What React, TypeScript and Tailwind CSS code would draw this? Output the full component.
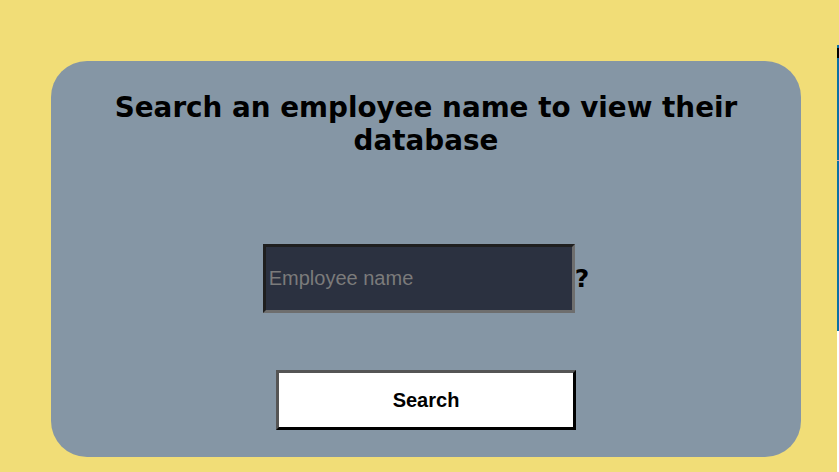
export default function App() {
  return (
    <div className="relative min-h-[472px] w-full overflow-hidden bg-[#f1dd77] pt-[61px] pl-[51px]">
      <div className="flex h-[396px] w-[750px] flex-col items-center rounded-[36px] bg-[#8596a5] pt-[30px]">
        <h1 className="w-[660px] text-center font-['DejaVu_Sans',Verdana,sans-serif] text-[27.8px] leading-[33px] font-bold text-black">
          Search an employee name to view their database
        </h1>

        <div className="mt-[87px] flex items-center">
          <input
            type="text"
            placeholder="Employee name"
            className="h-[69px] w-[312px] border-[3px] border-t-[#1f1f1f] border-l-[#1f1f1f] border-r-[#6e6e6e] border-b-[#6e6e6e] bg-[#2b3140] px-[3px] font-['Liberation_Sans',Arial,sans-serif] text-[20px] text-[#c8c8c8] outline-none placeholder:text-[#7b7b7b]"
          />
          <span className="font-['DejaVu_Sans',Verdana,sans-serif] text-[25px] font-bold text-black">?</span>
        </div>

        <button className="mt-[57px] h-[60px] w-[300px] border-[3px] border-t-[#555555] border-l-[#555555] border-r-black border-b-black bg-white font-['Liberation_Sans',Arial,sans-serif] text-[20px] font-bold text-black">
          Search
        </button>
      </div>

      {/* edge of a neighbouring panel peeking in at the right */}
      <div className="absolute top-[45px] right-0 flex h-[427px] w-[2px] flex-col">
        <div className="h-[3px] bg-[#0b6fa6]" />
        <div className="h-[10px] bg-black" />
        <div className="h-[102px] bg-[#0b6fa6]" />
        <div className="h-[1px] bg-[#d9a0a8]" />
        <div className="h-[170px] bg-[#0b6fa6]" />
        <div className="flex-1 bg-white" />
      </div>
    </div>
  );
}
